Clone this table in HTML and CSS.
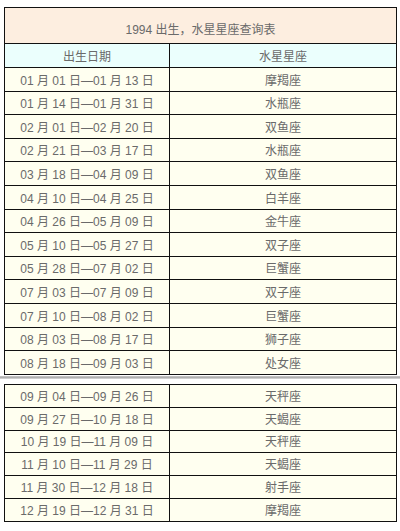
FILE: index.html
```html
<!DOCTYPE html>
<html lang="zh-CN">
<head>
<meta charset="utf-8">
<title>1994 出生，水星星座查询表</title>
<link rel="stylesheet" href="styles.css">
</head>
<body>
<table class="tbl tbl-first">
  <colgroup><col class="col1"><col class="col2"></colgroup>
  <tr class="title-row"><td colspan="2">1994 出生，水星星座查询表</td></tr>
  <tr class="head-row"><td>出生日期</td><td>水星星座</td></tr>
  <tr><td>01 月 01 日—01 月 13 日</td><td>摩羯座</td></tr>
  <tr><td>01 月 14 日—01 月 31 日</td><td>水瓶座</td></tr>
  <tr><td>02 月 01 日—02 月 20 日</td><td>双鱼座</td></tr>
  <tr><td>02 月 21 日—03 月 17 日</td><td>水瓶座</td></tr>
  <tr><td>03 月 18 日—04 月 09 日</td><td>双鱼座</td></tr>
  <tr><td>04 月 10 日—04 月 25 日</td><td>白羊座</td></tr>
  <tr><td>04 月 26 日—05 月 09 日</td><td>金牛座</td></tr>
  <tr><td>05 月 10 日—05 月 27 日</td><td>双子座</td></tr>
  <tr><td>05 月 28 日—07 月 02 日</td><td>巨蟹座</td></tr>
  <tr><td>07 月 03 日—07 月 09 日</td><td>双子座</td></tr>
  <tr><td>07 月 10 日—08 月 02 日</td><td>巨蟹座</td></tr>
  <tr><td>08 月 03 日—08 月 17 日</td><td>狮子座</td></tr>
  <tr><td>08 月 18 日—09 月 03 日</td><td>处女座</td></tr>
</table>
<div class="sep"></div>
<table class="tbl tbl-second">
  <colgroup><col class="col1"><col class="col2"></colgroup>
  <tr><td>09 月 04 日—09 月 26 日</td><td>天秤座</td></tr>
  <tr><td>09 月 27 日—10 月 18 日</td><td>天蝎座</td></tr>
  <tr><td>10 月 19 日—11 月 09 日</td><td>天秤座</td></tr>
  <tr><td>11 月 10 日—11 月 29 日</td><td>天蝎座</td></tr>
  <tr><td>11 月 30 日—12 月 18 日</td><td>射手座</td></tr>
  <tr><td>12 月 19 日—12 月 31 日</td><td>摩羯座</td></tr>
</table>
</body>
</html>
```

FILE: styles.css
```css
html, body {
  margin: 0;
  padding: 0;
  background: #ffffff;
}
body {
  padding-top: 7px;
  font-family: "Liberation Sans", "Noto Sans CJK SC", sans-serif;
  font-size: 12px;
  color: #6a6a6a;
}
.tbl {
  border-collapse: collapse;
  width: 392px;
  margin: 0 4px;
  table-layout: fixed;
}
.col1 {
  width: 165px;
}
.col2 {
  width: 227px;
}
.tbl td {
  border: 1px solid #111111;
  background: #fffff0;
  text-align: center;
  vertical-align: bottom;
  padding: 0 0 2px 0;
  line-height: 16px;
  height: 20.6px;
}
.tbl-second td {
  height: 19.9px;
}
.title-row td {
  background: #fdeee0;
  height: 30px;
  padding-bottom: 5px;
}
.head-row td {
  background: #ebfffd;
  height: 21px;
}
.sep {
  height: 3px;
  margin: 1px 0 5px 0;
  background: linear-gradient(#c8c8c8, #b0b0b0 50%, #dcdcdc);
}
```
